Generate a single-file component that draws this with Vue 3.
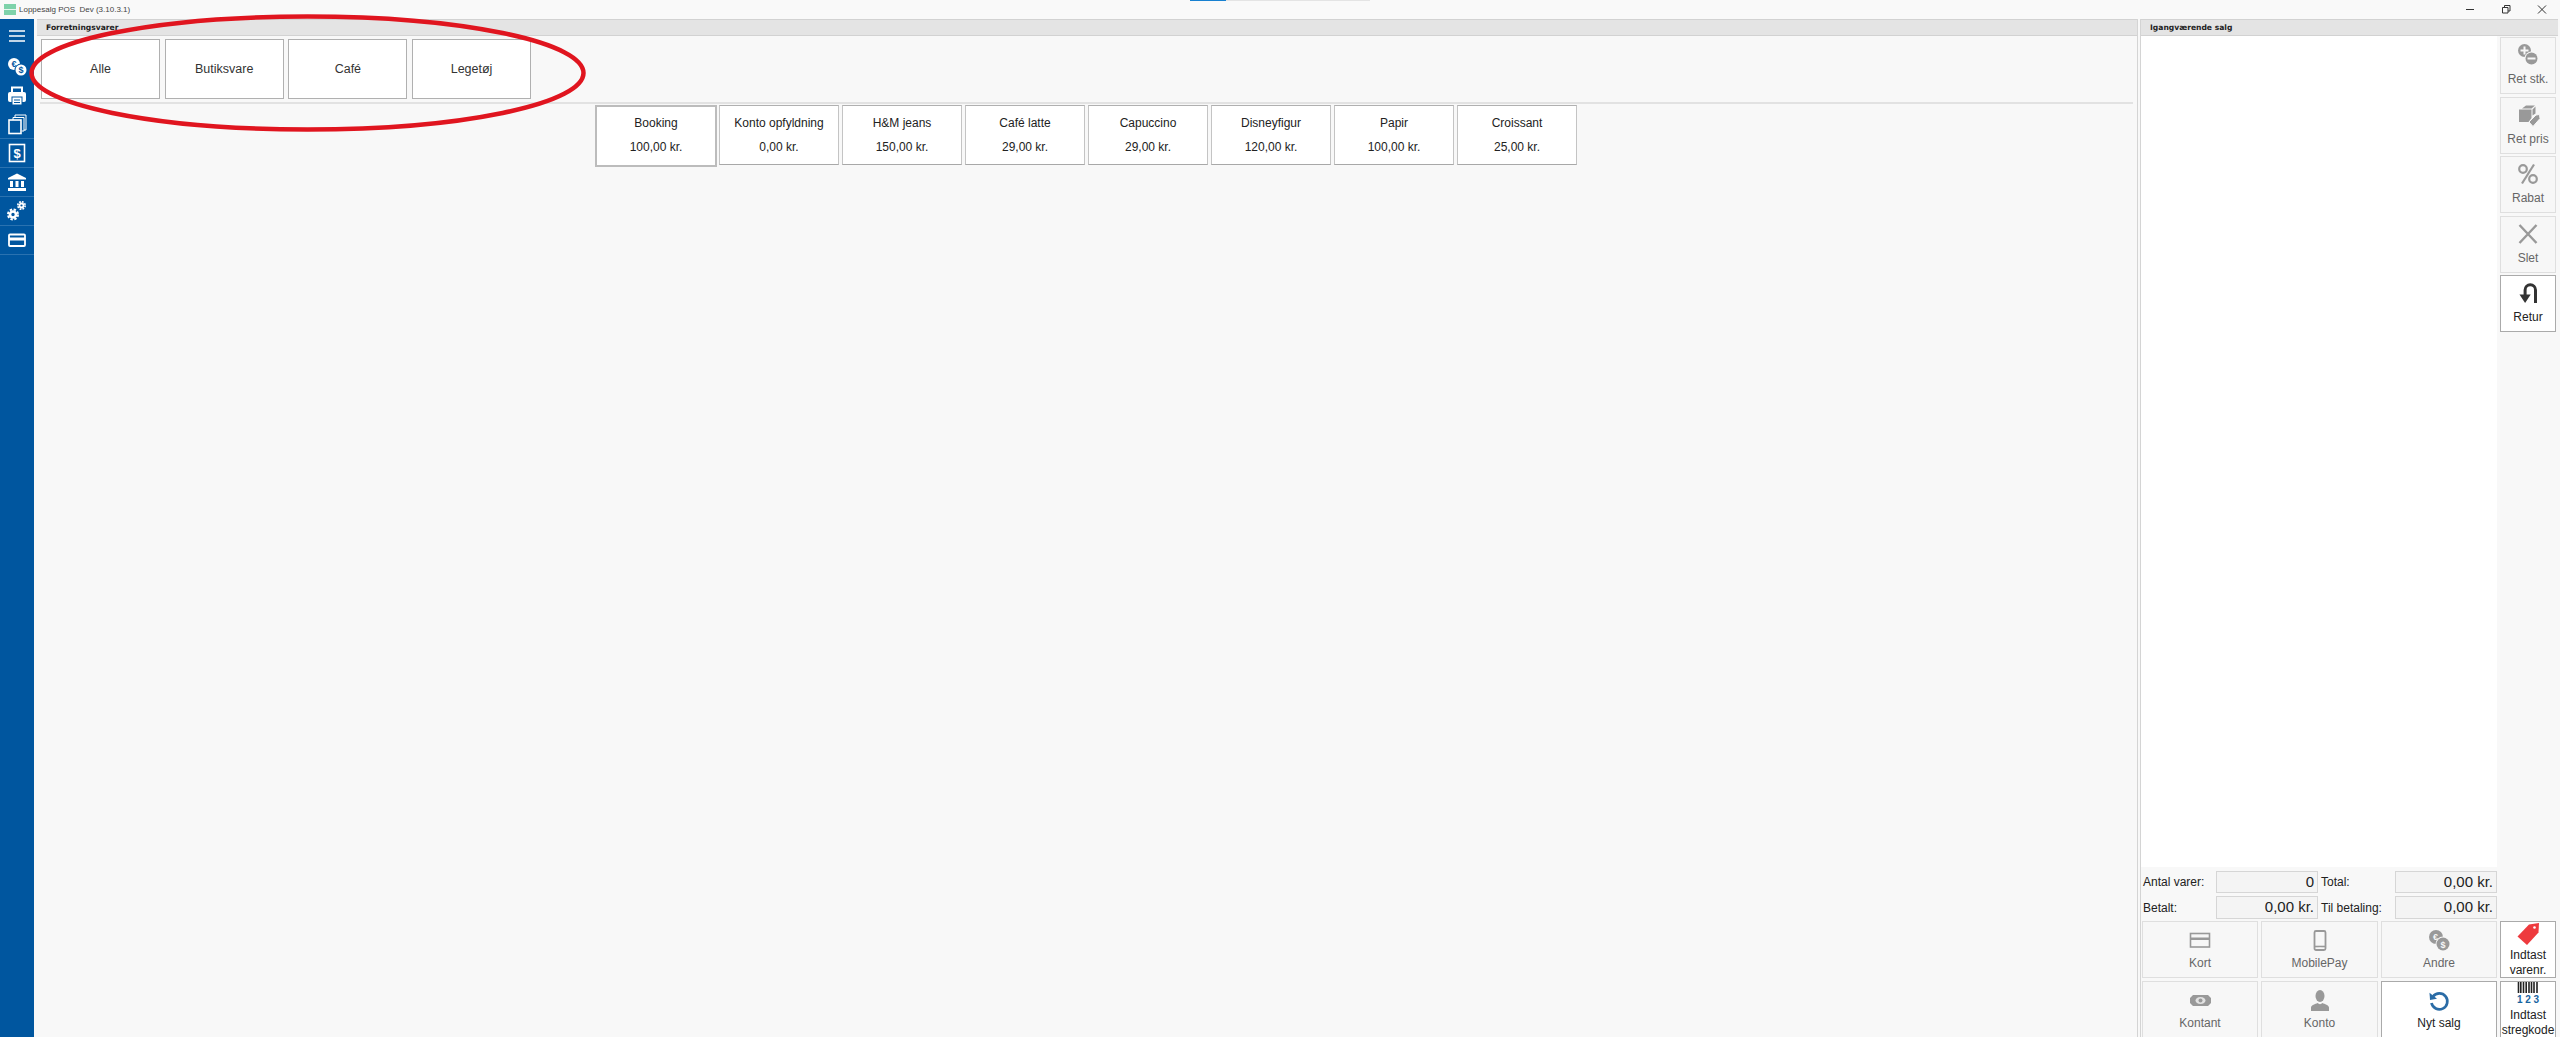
<script setup>
const categories = ['Alle', 'Butiksvare', 'Café', 'Legetøj']
const products = [
  ['Booking', '100,00 kr.'],
  ['Konto opfyldning', '0,00 kr.'],
  ['H&M jeans', '150,00 kr.'],
  ['Café latte', '29,00 kr.'],
  ['Capuccino', '29,00 kr.'],
  ['Disneyfigur', '120,00 kr.'],
  ['Papir', '100,00 kr.'],
  ['Croissant', '25,00 kr.']
]
</script>

<template>
  <div class="app">
    <header class="titlebar">
      <span class="logo"></span>
      <span class="apptitle">Loppesalg POS&nbsp; Dev (3.10.3.1)</span>
      <span class="taskmark"></span>
      <div class="winctl">
        <svg width="36" height="19" viewBox="0 0 36 19"><path d="M14 9.500h8" stroke="#333" fill="none"/></svg>
        <svg width="36" height="19" viewBox="0 0 36 19"><path d="M14.500 7.500h5.500v5.500h-5.500zM16.500 7.500v-2h5.500v5.500h-2" stroke="#333" fill="none"/></svg>
        <svg width="36" height="19" viewBox="0 0 36 19"><path d="M14 5.500l8 8M22 5.500l-8 8" stroke="#333" fill="none"/></svg>
      </div>
    </header>

    <div class="body">
      <nav class="sidebar">
        <div class="navitem first">
          <svg width="24" height="24" viewBox="0 0 24 24"><path d="M4 7h16M4 12h16M4 17h16" stroke="#fff" stroke-width="1.500" fill="none"/></svg>
        </div>
        <div class="navitem">
          <svg width="24" height="24" viewBox="0 0 24 24">
            <circle cx="9" cy="9" r="6" fill="#fff"/><circle cx="16" cy="15" r="6.500" fill="#00569f"/><circle cx="16" cy="15" r="5.500" fill="#fff"/>
            <text x="9" y="12" class="glyph" fill="#00569f">€</text><text x="16" y="18" class="glyph" fill="#00569f">$</text>
          </svg>
        </div>
        <div class="navitem">
          <svg width="24" height="24" viewBox="0 0 24 24">
            <path d="M7 9V3.500h10V9" stroke="#fff" stroke-width="2" fill="none"/>
            <rect x="3" y="8" width="18" height="10" rx="2" fill="#fff"/>
            <rect x="7" y="13" width="10" height="8" fill="#fff" stroke="#00569f"/>
            <path d="M9 16h6M9 18.500h6" stroke="#00569f"/>
          </svg>
        </div>
        <div class="navitem sep">
          <svg width="24" height="24" viewBox="0 0 24 24">
            <path d="M10 6V3h11v15h-2M8 8V5.500h11V19h-2" stroke="#fff" fill="none"/>
            <rect x="4" y="8" width="12" height="13.500" fill="#00569f" stroke="#fff" stroke-width="1.600"/>
          </svg>
        </div>
        <div class="navitem sep">
          <svg width="24" height="24" viewBox="0 0 24 24">
            <rect x="4.500" y="3.500" width="15" height="17" fill="#00569f" stroke="#fff" stroke-width="1.600"/>
            <text x="12" y="16.500" class="glyph big" fill="#fff">$</text>
          </svg>
        </div>
        <div class="navitem sep">
          <svg width="24" height="24" viewBox="0 0 24 24" fill="#fff">
            <path d="M12 3.500l9 4.500v1.500H3V8z"/><rect x="5" y="11" width="3" height="6"/><rect x="10.500" y="11" width="3" height="6"/><rect x="16" y="11" width="3" height="6"/><rect x="3" y="18" width="18" height="3"/>
          </svg>
        </div>
        <div class="navitem sep">
          <svg width="24" height="24" viewBox="0 0 24 24" fill="none">
            <circle cx="8" cy="15.500" r="3" stroke="#fff" stroke-width="2.600"/><circle cx="8" cy="15.500" r="5" stroke="#fff" stroke-width="2" stroke-dasharray="2.400 1.530"/>
            <circle cx="16.500" cy="6.500" r="2" stroke="#fff" stroke-width="1.800"/><circle cx="16.500" cy="6.500" r="3.700" stroke="#fff" stroke-width="1.600" stroke-dasharray="1.800 1.100"/>
          </svg>
        </div>
        <div class="navitem sep">
          <svg width="24" height="24" viewBox="0 0 24 24">
            <rect x="4" y="6.500" width="16" height="11.500" rx="1" fill="none" stroke="#fff" stroke-width="1.800"/>
            <rect x="4" y="9.500" width="16" height="3" fill="#fff"/>
          </svg>
        </div>
      </nav>

      <main class="main">
        <div class="panelhead">Forretningsvarer</div>
        <div class="categories">
          <button v-for="c in categories" :key="c" class="catbtn">{{ c }}</button>
        </div>
        <div class="divider"></div>
        <div class="products">
          <button v-for="(p, i) in products" :key="p[0]" class="prodbtn" :class="{ focus: i === 0 }">
            <span>{{ p[0] }}</span>
            <span>{{ p[1] }}</span>
          </button>
        </div>
      </main>

      <aside class="sale">
        <div class="panelhead sale-head">Igangværende salg</div>
        <div class="sale-top">
          <div class="list"></div>
          <div class="sidecol">
            <button class="ibtn side off">
              <svg width="24" height="24" viewBox="0 0 24 24">
                <circle cx="8.500" cy="7.500" r="6.500" fill="#999"/><path d="M8.500 3.500v8M4.500 7.500h8" stroke="#f7f7f7" stroke-width="2"/>
                <circle cx="15.500" cy="15.500" r="7" fill="#f7f7f7"/><circle cx="15.500" cy="15.500" r="6" fill="#999"/><path d="M11.500 15.500h8" stroke="#f7f7f7" stroke-width="2"/>
              </svg>
              <span>Ret stk.</span>
            </button>
            <button class="ibtn side off">
              <svg width="24" height="24" viewBox="0 0 24 24" fill="#999">
                <path d="M6 5.500l4-3h9l-3.500 3zM16.500 6.500l3-3v7l-3 2zM3 6.500h12.500v8.500l-3 4H3z"/>
                <path d="M13 19l7-7 3.500-.5.500 4-7 8z" stroke="#f7f7f7"/>
              </svg>
              <span>Ret pris</span>
            </button>
            <button class="ibtn side off">
              <svg width="24" height="24" viewBox="0 0 24 24" fill="none" stroke="#999" stroke-width="2.200">
                <circle cx="7" cy="7" r="3.800"/><circle cx="17" cy="17" r="3.800"/><path d="M18 2.500L6 21.500"/>
              </svg>
              <span>Rabat</span>
            </button>
            <button class="ibtn side off">
              <svg width="24" height="24" viewBox="0 0 24 24"><path d="M3.500 3l17 18M20.500 3l-17 18" stroke="#999" stroke-width="2.400" fill="none"/></svg>
              <span>Slet</span>
            </button>
            <button class="ibtn side on">
              <svg width="24" height="24" viewBox="0 0 24 24">
                <path d="M19.500 22V9a5.200 5.200 0 0 0-10.400 0v7" stroke="#333" stroke-width="3" fill="none"/>
                <path d="M3.500 13.500h11.200L9.100 22z" fill="#333"/>
              </svg>
              <span>Retur</span>
            </button>
          </div>
        </div>

        <div class="stats">
          <div class="statrow">
            <label class="l1">Antal varer:</label><output class="val">0</output>
            <label class="l2">Total:</label><output class="val">0,00 kr.</output>
          </div>
          <div class="statrow tall">
            <label class="l1">Betalt:</label><output class="val">0,00 kr.</output>
            <label class="l2">Til betaling:</label><output class="val">0,00 kr.</output>
          </div>
        </div>

        <div class="paygrid">
          <button class="ibtn off">
            <svg width="24" height="24" viewBox="0 0 24 24">
              <rect x="2.500" y="4.500" width="19" height="13.500" fill="none" stroke="#999" stroke-width="1.600"/><rect x="2.500" y="8.500" width="19" height="2.500" fill="#999"/>
            </svg>
            <span>Kort</span>
          </button>
          <button class="ibtn off">
            <svg width="24" height="24" viewBox="0 0 24 24">
              <rect x="6.500" y="2" width="11" height="19" rx="1.500" fill="none" stroke="#999" stroke-width="1.800"/><path d="M7 17.500h10" stroke="#999" stroke-width="1.600"/><path d="M10.500 19.200h3" stroke="#f7f7f7"/>
            </svg>
            <span>MobilePay</span>
          </button>
          <button class="ibtn off">
            <svg width="24" height="24" viewBox="0 0 24 24">
              <circle cx="9" cy="8" r="7" fill="#999"/><circle cx="16" cy="15" r="7.500" fill="#f7f7f7"/><circle cx="16" cy="15" r="6.500" fill="#999"/>
              <text x="8.500" y="11" class="glyph" fill="#f7f7f7">€</text><text x="16" y="18.500" class="glyph" fill="#f7f7f7">$</text>
            </svg>
            <span>Andre</span>
          </button>
          <button class="ibtn tag on thin">
            <svg width="24" height="24" viewBox="0 0 24 24">
              <path d="M1.500 14.500L13 2.500 23 1l-.5 9.500L11 23z" fill="#ee3a3e"/><circle cx="18.500" cy="5.500" r="1.300" fill="#fff"/>
            </svg>
            <span>Indtast<br>varenr.</span>
          </button>
          <button class="ibtn off">
            <svg width="24" height="24" viewBox="0 0 24 24">
              <path d="M2 6h21v11H2z" fill="#999"/><path d="M2 6h3L2 9zM23 6h-3l3 3zM2 17h3l-3-3zM23 17h-3l3-3z" fill="#f7f7f7"/>
              <ellipse cx="12.500" cy="11.500" rx="5" ry="3.500" fill="#e2e2e2"/><circle cx="12.500" cy="11.500" r="2" fill="#999"/>
            </svg>
            <span>Kontant</span>
          </button>
          <button class="ibtn off">
            <svg width="24" height="24" viewBox="0 0 24 24" fill="#999">
              <ellipse cx="12" cy="7" rx="4.500" ry="6"/><path d="M3 22v-3.500c0-2.500 4.500-3.500 6.500-4.500 1.500 1.500 3.500 1.500 5 0 2 1 6.500 2 6.500 4.500V22z"/>
            </svg>
            <span>Konto</span>
          </button>
          <button class="ibtn on">
            <svg width="24" height="24" viewBox="0 0 24 24">
              <path d="M6 7.500A8 8 0 1 1 4.500 14" stroke="#2b6ca6" stroke-width="2.700" fill="none"/>
              <path d="M2.500 3.800l.5 7.200 7-1.200z" fill="#2b6ca6"/>
            </svg>
            <span class="dark">Nyt salg</span>
          </button>
          <button class="ibtn tag on thin">
            <svg width="24" height="24" viewBox="0 0 24 24">
              <path d="M2.500 0v11M4.800 0v11M7.500 0v11M10.200 0v11M13 0v11M15.500 0v11M18 0v11M21 0v11" stroke="#222" stroke-width="1.600"/>
              <text x="12" y="21" class="digits" fill="#17649f">1 2 3</text>
            </svg>
            <span>Indtast<br>stregkode</span>
          </button>
        </div>
      </aside>
    </div>

    <svg class="ring" width="2560" height="1037" viewBox="0 0 2560 1037">
      <ellipse cx="307.500" cy="73" rx="276" ry="56.500" fill="none" stroke="#e0151f" stroke-width="4.500"/>
    </svg>
  </div>
</template>

<style>
html, body { margin: 0; background: #f8f8f8; overflow: hidden; }
</style>

<style scoped>
.app {
  position: relative;
  width: 2560px;
  height: 1037px;
  overflow: hidden;
  background: #f8f8f8;
  display: flex;
  flex-direction: column;
  font-family: "Liberation Sans", Arial, sans-serif;
  font-size: 12px;
  color: #222;
}
button { font: inherit; margin: 0; cursor: default; }

.titlebar {
  position: relative;
  height: 19px;
  flex: none;
  display: flex;
  align-items: center;
  background: #f9f9f9;
}
.logo {
  width: 12px;
  height: 11px;
  margin-left: 4px;
  margin-top: -1px;
  background: linear-gradient(#7ed2aa 0 5px, #e9f7f0 5px 6px, #7ed2aa 6px);
}
.apptitle {
  margin-left: 3px;
  font-size: 8px;
  color: #444;
}
.taskmark {
  position: absolute;
  left: 1190px;
  top: 0;
  width: 180px;
  height: 1px;
  background: linear-gradient(90deg, #1780d0 0 36px, #e4e4e4 36px);
}
.winctl {
  position: absolute;
  right: 0;
  top: 0;
  display: flex;
  height: 19px;
}
.winctl svg { display: block; }

.body { flex: 1; min-height: 0; display: flex; }

.sidebar {
  width: 34px;
  flex: none;
  background: #00569f;
  display: flex;
  flex-direction: column;
}
.navitem {
  height: 29px;
  flex: none;
  display: flex;
  align-items: center;
  justify-content: center;
  box-sizing: border-box;
}
.navitem.first { height: 33px; }
.navitem.sep { border-bottom: 1px solid #2a72b0; }

.glyph {
  font-family: "Liberation Sans", Arial, sans-serif;
  font-size: 9px;
  font-weight: 700;
  text-anchor: middle;
}
.glyph.big { font-size: 13px; }
.digits {
  font-family: "Liberation Sans", Arial, sans-serif;
  font-size: 10px;
  font-weight: 700;
  text-anchor: middle;
}

.main {
  flex: 1;
  min-width: 0;
  margin-left: 3px;
  border-right: 1px solid #d4d4d4;
}
.panelhead {
  height: 17px;
  box-sizing: border-box;
  background: #e4e4e4;
  border-top: 1px solid #d2d2d2;
  border-bottom: 1px solid #d2d2d2;
  padding-left: 9px;
  font-family: "DejaVu Sans", sans-serif;
  font-size: 7.600px;
  font-weight: 700;
  line-height: 15px;
  color: #222;
}
.categories {
  display: flex;
  gap: 4.700px;
  padding: 3px 0 0 4px;
}
.catbtn {
  width: 119px;
  height: 60px;
  background: #fff;
  border: 1px solid #b0b0b0;
  padding: 0;
  color: #333;
  font-size: 12.500px;
}
.divider {
  height: 2px;
  margin: 3px 4px 0 3px;
  background: #e2e2e2;
}
.products {
  display: flex;
  justify-content: center;
  gap: 3px;
  margin-top: 1px;
  padding-right: 2px;
}
.prodbtn {
  width: 120px;
  height: 60px;
  box-sizing: border-box;
  background: #fff;
  border: 1px solid #c4c4c4;
  border-top-color: #b0b0b0;
  border-bottom-color: #a8a8a8;
  display: flex;
  flex-direction: column;
  align-items: center;
  justify-content: flex-start;
  gap: 9px;
  padding: 10px 0 0;
  line-height: 15px;
  color: #222;
}
.prodbtn.focus {
  width: 122px;
  margin-right: -1px;
  height: 62px;
  border: 2px solid #bcbcbc;
  padding-top: 9px;
}

.sale {
  width: 420px;
  flex: none;
  box-sizing: border-box;
  border-left: 1px solid #d4d4d4;
  margin-left: 2px;
  display: flex;
  flex-direction: column;
}
.sale-head { margin-right: 2px; }
.sale-top { flex: 1; min-height: 0; display: flex; }
.list { width: 356px; background: #fff; flex: none; }
.sidecol {
  width: 56px;
  margin-left: 3px;
  padding-top: 1px;
  display: flex;
  flex-direction: column;
  gap: 2.500px;
}
.ibtn {
  box-sizing: border-box;
  display: flex;
  flex-direction: column;
  align-items: center;
  padding: 7px 0 0;
  line-height: 15px;
  overflow: hidden;
  min-width: 0;
}
.ibtn svg { display: block; flex: none; }
.ibtn span { margin-top: 3px; white-space: nowrap; }
.ibtn.side { height: 57px; padding-top: 5px; }
.ibtn.side span { margin-top: 5px; }
.ibtn.off {
  background: #f7f7f7;
  border: 1.500px solid #dfdfdf;
  color: #666;
}
.ibtn.on {
  background: #fff;
  border: 1.500px solid #aaa;
  color: #222;
}
.ibtn.thin { border-bottom-width: 1px; }
.ibtn.tag { padding-top: 0; }
.ibtn.tag span { margin-top: 2px; }
.dark { color: #222; }

.stats {
  width: 356px;
  padding-top: 4px;
  flex: none;
}
.statrow {
  height: 22px;
  display: flex;
  align-items: stretch;
  margin-bottom: 3px;
}
.statrow.tall { height: 23px; margin-bottom: 2px; }
.statrow label {
  display: flex;
  align-items: center;
  color: #222;
}
.l1 { width: 75px; padding-left: 2px; box-sizing: border-box; }
.l2 { width: 77px; padding-left: 3px; box-sizing: border-box; }
.val {
  width: 102px;
  box-sizing: border-box;
  background: #f4f4f4;
  border: 1px solid #d6d6d6;
  text-align: right;
  font-size: 15px;
  line-height: 20px;
  padding-right: 3px;
  color: #222;
}

.paygrid {
  flex: none;
  display: grid;
  grid-template-columns: 116px 117px 116px 56px;
  grid-template-rows: 57px 57px;
  gap: 3px;
  padding-left: 1px;
  margin-bottom: -1px;
}

.ring {
  position: absolute;
  left: 0;
  top: 0;
  pointer-events: none;
}
</style>
